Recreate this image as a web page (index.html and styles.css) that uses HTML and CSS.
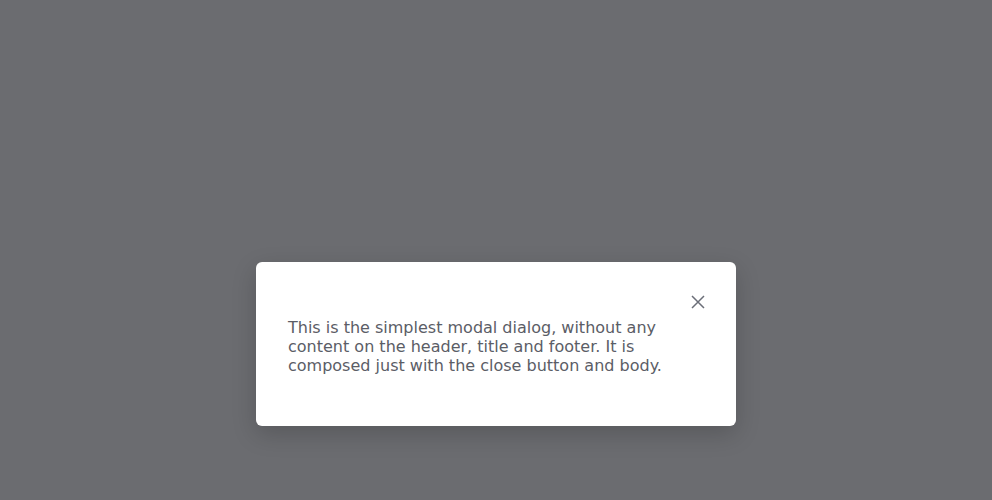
FILE: index.html
```html
<!DOCTYPE html>
<html>
<head>
<meta charset="utf-8">
<link rel="stylesheet" href="styles.css">
</head>
<body>
<div class="overlay">
  <div class="modal">
    <div class="modal-header">
      <button class="close" aria-label="Close">
        <svg width="14" height="14" viewBox="0 0 14 14"><path d="M1 1L13 13M13 1L1 13" stroke="#6b6e78" stroke-width="1.5" fill="none"/></svg>
      </button>
    </div>
    <div class="modal-body">This is the simplest modal dialog, without any content on the header, title and footer. It is composed just with the close button and body.</div>
  </div>
</div>
</body>
</html>
```
FILE: styles.css
```css
html, body {
  margin: 0;
  padding: 0;
  height: 100%;
}
body {
  font-family: "DejaVu Sans", sans-serif;
  background: #6b6c70;
}
.overlay {
  height: 100%;
  display: flex;
  justify-content: center;
  align-items: flex-start;
  padding-top: 262px;
  box-sizing: border-box;
}
.modal {
  width: 480px;
  box-sizing: border-box;
  background: #ffffff;
  border-radius: 6px;
  padding: 24px 32px 51px;
  box-shadow: 0 8px 24px rgba(0, 0, 0, 0.18);
}
.modal-header {
  height: 32px;
  display: flex;
  justify-content: flex-end;
  align-items: center;
}
.close {
  width: 24px;
  height: 24px;
  margin-right: -6px;
  padding: 0;
  border: 0;
  background: transparent;
  display: flex;
  align-items: center;
  justify-content: center;
  cursor: pointer;
}
.close svg {
  display: block;
}
.modal-body {
  font-size: 16px;
  line-height: 19px;
  color: #5b5d66;
}
```
